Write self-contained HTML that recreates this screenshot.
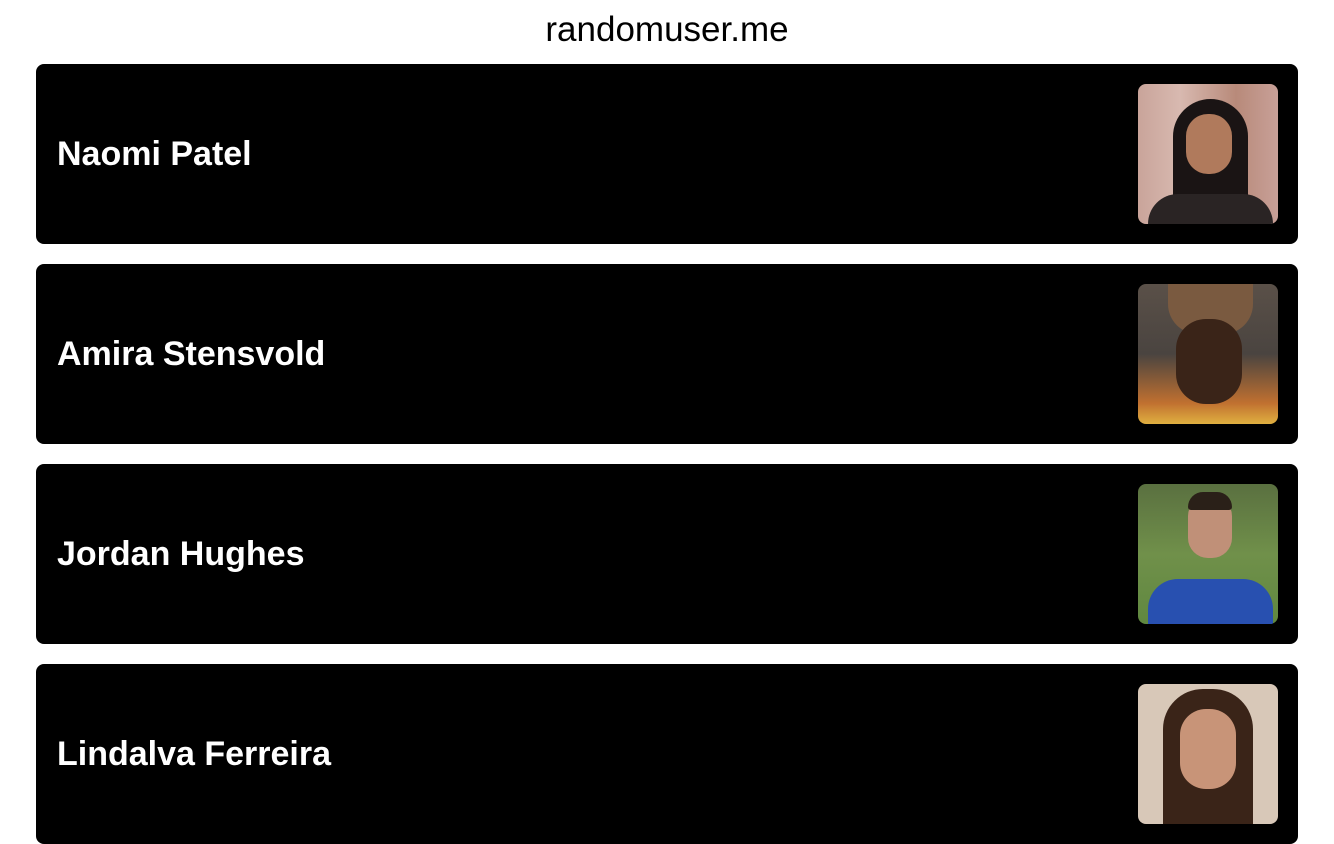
<!DOCTYPE html>
<html><head><meta charset="utf-8"><style>
html,body{margin:0;padding:0;background:#fff;width:1334px;height:750px;overflow:hidden;font-family:"Liberation Sans",sans-serif}
.t{position:absolute;top:10px;left:0;width:1334px;text-align:center;font-size:35px;color:#000;line-height:40px}
.c{position:absolute;left:36px;width:1262px;height:180px;background:#000;border-radius:8px}
.n{position:absolute;left:21px;top:0;line-height:180px;font-size:34px;font-weight:bold;color:#fff}
.p{position:absolute;left:1102px;top:20px;width:140px;height:140px;border-radius:8px;overflow:hidden}
</style></head><body>
<div class="t">randomuser.me</div>
<div class="c" style="top:64px"><div class="n">Naomi Patel</div>
<div class="p" style="background:linear-gradient(90deg,#c9a49a,#d8b9b0 30%,#b88a7a 70%,#c8a098)">
<div style="position:absolute;left:35px;top:15px;width:75px;height:125px;background:#1a1414;border-radius:40px 40px 10px 10px"></div>
<div style="position:absolute;left:48px;top:30px;width:46px;height:60px;background:#b07a5c;border-radius:22px"></div>
<div style="position:absolute;left:10px;top:110px;width:125px;height:40px;background:#2a2424;border-radius:30px 30px 0 0"></div></div></div>
<div class="c" style="top:264px"><div class="n">Amira Stensvold</div>
<div class="p" style="background:linear-gradient(180deg,#5a5048,#4a4440 50%,#c07030 85%,#e0b040)">
<div style="position:absolute;left:30px;top:0;width:85px;height:50px;background:#7a5a40;border-radius:0 0 30px 30px"></div>
<div style="position:absolute;left:38px;top:35px;width:66px;height:85px;background:#3a2418;border-radius:30px"></div></div></div>
<div class="c" style="top:464px"><div class="n">Jordan Hughes</div>
<div class="p" style="background:linear-gradient(180deg,#5a7040,#70904a 50%,#608840)">
<div style="position:absolute;left:50px;top:12px;width:44px;height:62px;background:#c09078;border-radius:20px"></div>
<div style="position:absolute;left:50px;top:8px;width:44px;height:18px;background:#2a2018;border-radius:20px 20px 4px 4px"></div>
<div style="position:absolute;left:10px;top:95px;width:125px;height:50px;background:#2850b0;border-radius:30px 30px 0 0"></div></div></div>
<div class="c" style="top:664px"><div class="n">Lindalva Ferreira</div>
<div class="p" style="background:#d8c8b8">
<div style="position:absolute;left:25px;top:5px;width:90px;height:140px;background:#3a2418;border-radius:40px 40px 0 0"></div>
<div style="position:absolute;left:42px;top:25px;width:56px;height:80px;background:#c89478;border-radius:26px"></div></div></div>
</body></html>
